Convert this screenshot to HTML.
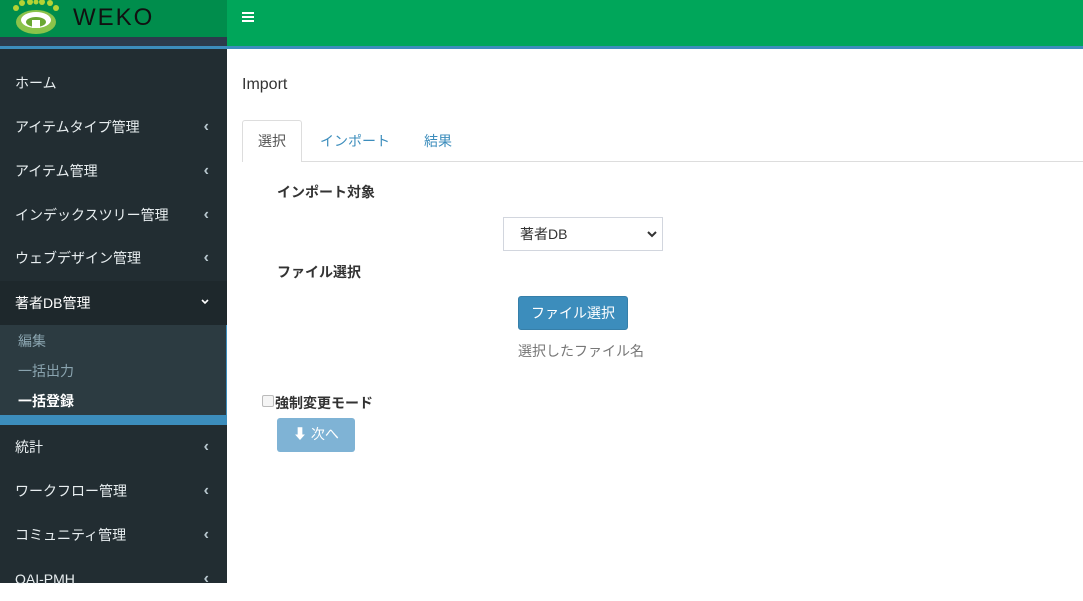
<!DOCTYPE html>
<html><head><meta charset="utf-8"><style>
*{margin:0;padding:0;box-sizing:border-box}
body{width:1083px;height:583px;overflow:hidden;font-family:"Liberation Sans","Noto Sans CJK JP",sans-serif;background:#fff;position:relative}
.logo{position:absolute;left:0;top:0;width:227px;height:37px;background:#008d4c}
.logo span{position:absolute;left:73px;top:4px;font-size:24px;letter-spacing:2px;color:#111}
.strip{position:absolute;left:0;top:37px;width:227px;height:9px;background:#2c3b4c}
.top{position:absolute;left:227px;top:0;right:0;height:46px;background:#00a65a}
.blue{position:absolute;left:0;top:46px;width:1083px;height:3px;background:#3c8dbc}
.side{position:absolute;left:0;top:49px;width:227px;bottom:0;background:#222d32}
.it{position:absolute;left:0;width:227px;height:44px;line-height:44px;padding-left:15px;color:#e8eef0;font-size:14px}
.it b{position:absolute;right:18px;top:0;font-weight:bold;color:#b8c7ce;font-size:16px}
.sub{position:absolute;left:0;top:276px;width:227px;height:90px;background:#2c3b41;border-right:1px solid #3c8dbc}
.si{position:absolute;left:18px;font-size:14px;color:#8aa4af}
</style></head><body>
<div class="logo">
<svg style="position:absolute;left:10px;top:0" width="52" height="36" viewBox="0 0 52 36"><g fill="#b5d334"><circle cx="6" cy="8" r="3"/><circle cx="12" cy="3" r="3"/><circle cx="20" cy="2" r="3"/><circle cx="32" cy="2" r="3"/><circle cx="40" cy="3" r="3"/><circle cx="46" cy="8" r="3"/><circle cx="26" cy="2" r="2.5"/></g><ellipse cx="26" cy="22" rx="20" ry="12" fill="#8bc34a"/><ellipse cx="26" cy="20" rx="15" ry="8" fill="#fff"/><ellipse cx="26" cy="22" rx="10" ry="5" fill="#6aa832"/><rect x="22" y="20" width="8" height="8" fill="#fff"/></svg>
<span>WEKO</span></div>
<div class="strip"></div>
<div class="top"><svg style="position:absolute;left:15px;top:12px" width="12" height="10"><rect y="0" width="12" height="2" fill="#fff"/><rect y="4" width="12" height="2" fill="#fff"/><rect y="8" width="12" height="2" fill="#fff"/></svg></div>
<div class="blue"></div>
<div class="side">
<div class="it" style="top:12px">ホーム</div>
<div class="it" style="top:56px">アイテムタイプ管理<b>‹</b></div>
<div class="it" style="top:100px">アイテム管理<b>‹</b></div>
<div class="it" style="top:144px">インデックスツリー管理<b>‹</b></div>
<div class="it" style="top:187px">ウェブデザイン管理<b>‹</b></div>
<div class="it" style="top:232px;background:#1e282c;height:44px;color:#fff">著者DB管理<svg style="position:absolute;right:18px;top:18px" width="8" height="6"><path d="M1 1L4 4L7 1" stroke="#fff" stroke-width="1.6" fill="none"/></svg></div>
<div class="sub">
<div class="si" style="top:6px">編集</div>
<div class="si" style="top:36px">一括出力</div>
<div class="si" style="top:66px;color:#fff;font-weight:bold">一括登録</div>
</div>
<div style="position:absolute;left:0;top:366px;width:227px;height:10px;background:#3c8dbc"></div>
<div class="it" style="top:376px">統計<b>‹</b></div>
<div class="it" style="top:420px">ワークフロー管理<b>‹</b></div>
<div class="it" style="top:464px">コミュニティ管理<b>‹</b></div>
<div class="it" style="top:508px">OAI-PMH<b>‹</b></div>
</div>
<div style="position:absolute;left:242px;top:76px;font-size:16px;color:#333">Import</div>
<div style="position:absolute;left:242px;top:161px;right:0;border-top:1px solid #ddd"></div>
<div style="position:absolute;left:242px;top:120px;width:60px;height:42px;border:1px solid #ddd;border-bottom:none;background:#fff;border-radius:3px 3px 0 0;text-align:center;line-height:40px;font-size:14px;color:#555">選択</div>
<div style="position:absolute;left:320px;top:131px;font-size:14px;color:#3c8dbc">インポート</div>
<div style="position:absolute;left:424px;top:131px;font-size:14px;color:#3c8dbc">結果</div>
<div style="position:absolute;left:277px;top:182px;font-size:14px;font-weight:bold;color:#333">インポート対象</div>
<div style="position:absolute;left:503px;top:217px;width:160px;height:34px;border:1px solid #d2d6de;font-size:14px;color:#333;line-height:32px;padding-left:16px">著者DB<svg style="position:absolute;right:5px;top:13px" width="10" height="7"><path d="M1 1L5 5L9 1" stroke="#333" stroke-width="2" fill="none"/></svg></div>
<div style="position:absolute;left:277px;top:262px;font-size:14px;font-weight:bold;color:#333">ファイル選択</div>
<div style="position:absolute;left:518px;top:296px;width:110px;height:34px;background:#3c8dbc;border:1px solid #367fa9;border-radius:3px;color:#fff;font-size:14px;text-align:center;line-height:32px">ファイル選択</div>
<div style="position:absolute;left:518px;top:341px;font-size:14px;color:#777">選択したファイル名</div>
<div style="position:absolute;left:262px;top:395px;width:12px;height:12px;border:1px solid #bbb;border-radius:2px;background:#f5f5f5"></div>
<div style="position:absolute;left:275px;top:393px;font-size:14px;font-weight:bold;color:#333">強制変更モード</div>
<div style="position:absolute;left:277px;top:418px;width:78px;height:34px;background:#7fb3d5;border-radius:3px;color:#fff;font-size:14px;line-height:32px;text-align:center">⬇ 次へ</div>
</body></html>
